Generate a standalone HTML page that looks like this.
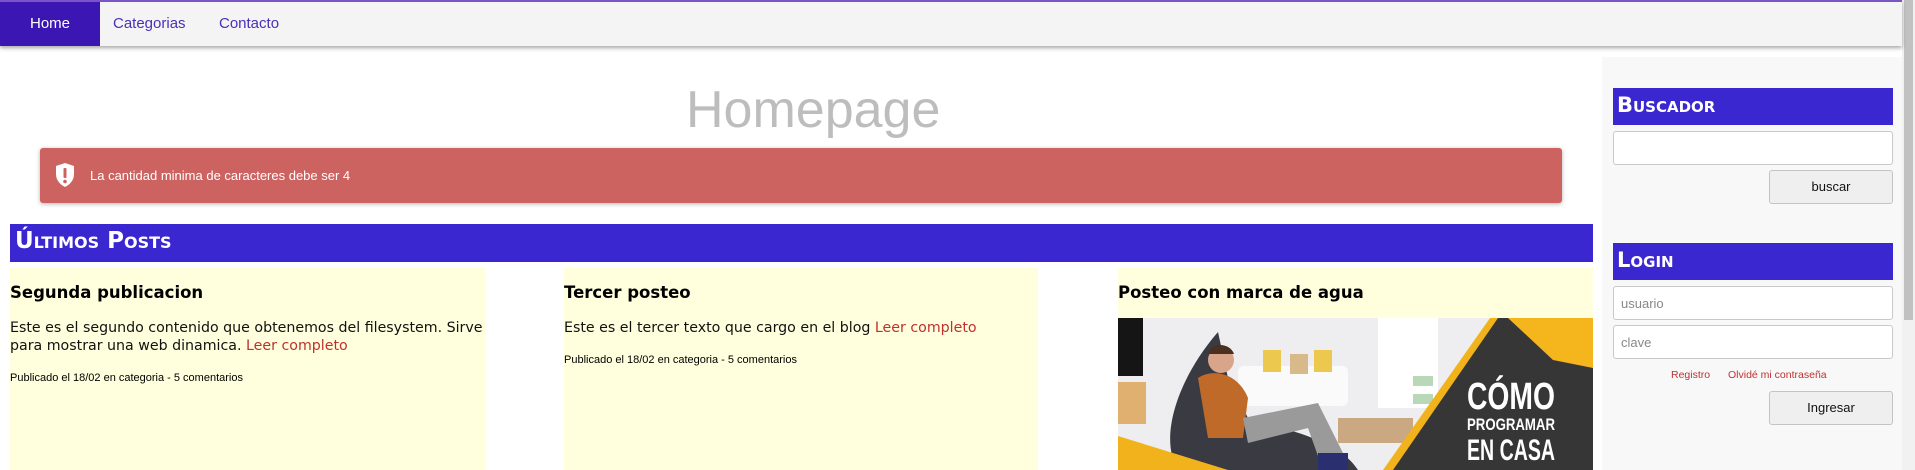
<!DOCTYPE html>
<html><head><meta charset="utf-8"><style>
*{box-sizing:border-box;margin:0;padding:0}
body{width:1915px;height:470px;overflow:hidden;background:#fff;font-family:"Liberation Sans",sans-serif;position:relative}
.abs{position:absolute}
nav{position:absolute;left:0;top:0;width:1902px;height:46px;background:#f4f4f4;border-top:2px solid #7b55c8;box-shadow:0 2px 4px rgba(0,0,0,.35);z-index:2}
nav a{position:absolute;top:13px;font-size:15px;color:#4a2fb8;text-decoration:none}
.home{position:absolute;left:0;top:0;width:100px;height:44px;background:#3c16b2}
.scroll{position:absolute;left:1902px;top:0;width:13px;height:470px;background:#f1f1f1}
.thumb{position:absolute;left:1904px;top:0;width:9px;height:320px;background:#c1c1c1}
.side{position:absolute;left:1602px;top:57px;width:300px;height:413px;background:#f8f8f8}
.hdr{position:absolute;background:#3b27d0;color:#fff;font-weight:bold;font-variant:small-caps;font-family:"DejaVu Sans",sans-serif}
.post{position:absolute;top:268px;height:202px;background:#ffffdd}
.post h3{position:absolute;left:0;top:15px;font-family:"DejaVu Sans",sans-serif;font-size:16.5px;font-weight:bold;color:#000;white-space:nowrap}
.post p{position:absolute;left:0;top:51px;font-family:"DejaVu Sans",sans-serif;font-size:14.2px;line-height:18px;color:#111}
.post p a{color:#c0302f;text-decoration:none}
.meta{position:absolute;left:0;font-size:11px;color:#000;white-space:nowrap}
.inp{position:absolute;left:1613px;width:280px;height:34px;background:#fff;border:1px solid #c9c9c9;border-radius:3px;font-size:13px;color:#888;padding:9px 0 0 7px}
.btn{position:absolute;left:1769px;width:124px;height:34px;background:#efefef;border:1px solid #c4c4c4;border-radius:3px;font-size:13px;color:#111;text-align:center;line-height:32px}
</style></head><body>
<nav><div class="home"></div>
<a style="left:30px;color:#fff">Home</a>
<a style="left:113px">Categorias</a>
<a style="left:219px">Contacto</a></nav>
<div class="scroll"></div><div class="thumb"></div>

<div class="abs" style="left:686px;top:80px;font-size:52px;color:#bdbdbd;font-family:'Liberation Sans',sans-serif;font-weight:normal">Homepage</div>

<div class="abs" style="left:40px;top:148px;width:1522px;height:55px;background:#cd6360;border-radius:3px;box-shadow:0 1px 4px rgba(0,0,0,.3)">
<svg class="abs" style="left:14px;top:14px" width="22" height="26" viewBox="0 0 22 26"><path d="M11 1 L20 4 L20 12 C20 19 15 23 11 25 C7 23 2 19 2 12 L2 4 Z" fill="#fff"/><rect x="9.5" y="6" width="3" height="10" rx="1" fill="#cd6360"/><circle cx="11" cy="19.5" r="1.8" fill="#cd6360"/></svg>
<div class="abs" style="left:50px;top:20px;color:#fff;font-size:13px">La cantidad minima de caracteres debe ser 4</div></div>

<div class="hdr" style="left:10px;top:224px;width:1583px;height:38px;font-size:23px;padding:4px 0 0 5px">Últimos Posts</div>

<div class="post" style="left:10px;width:475px"><h3>Segunda publicacion</h3>
<p>Este es el segundo contenido que obtenemos del filesystem. Sirve para mostrar una web dinamica. <a>Leer completo</a></p>
<div class="meta" style="top:104px">Publicado el 18/02 en categoria - 5 comentarios</div></div>

<div class="post" style="left:564px;width:474px"><h3>Tercer posteo</h3>
<p>Este es el tercer texto que cargo en el blog <a>Leer completo</a></p>
<div class="meta" style="top:86px">Publicado el 18/02 en categoria - 5 comentarios</div></div>

<div class="post" style="left:1118px;width:475px"><h3>Posteo con marca de agua</h3>
<svg class="abs" style="left:0;top:50px" width="475" height="152" viewBox="0 0 475 152">
<rect width="475" height="152" fill="#eeeef0"/>
<rect x="0" y="0" width="25" height="58" fill="#151515"/>
<rect x="0" y="64" width="28" height="42" fill="#e0b070"/>
<rect x="120" y="48" width="110" height="40" rx="6" fill="#fafafa"/>
<rect x="145" y="32" width="18" height="22" fill="#ecc84f"/><rect x="172" y="36" width="18" height="20" fill="#d8b98a"/><rect x="196" y="32" width="18" height="22" fill="#ecc84f"/>
<rect x="260" y="0" width="60" height="90" fill="#fff"/><rect x="295" y="58" width="20" height="10" fill="#b8d8b8"/><rect x="295" y="76" width="20" height="10" fill="#b8d8b8"/>
<rect x="220" y="100" width="75" height="25" fill="#c9a882"/>
<path d="M100 14 C60 60 40 120 60 152 L240 152 C220 120 160 110 130 100 L110 60 Z" fill="#3a3a42"/>
<path d="M80 60 C95 50 120 55 130 80 L125 120 L90 120 Z" fill="#c06a2a"/>
<circle cx="103" cy="42" r="13" fill="#d9a58a"/><path d="M90 36 C92 24 112 24 116 36 Z" fill="#4a3020"/>
<path d="M125 100 L200 85 L230 145 L205 152 L190 110 L130 125 Z" fill="#9a9a9a"/>
<rect x="200" y="135" width="30" height="17" fill="#2a2f70"/>
<path d="M0 118 L110 152 L0 152 Z" fill="#f2b21b"/>
<path d="M372 0 L475 0 L475 152 L265 152 Z" fill="#f2b21b"/>
<path d="M380 0 L475 0 L475 152 L275 152 Z" fill="#363636"/>
<path d="M390 0 L475 0 L475 50 L435 42 Z" fill="#f5b51c"/>
<text x="393" y="91" text-anchor="middle" font-family="Liberation Sans" font-weight="bold" font-size="38" fill="#fff" textLength="88" lengthAdjust="spacingAndGlyphs">CÓMO</text>
<text x="393" y="112" text-anchor="middle" font-family="Liberation Sans" font-weight="bold" font-size="17" fill="#fff" textLength="88" lengthAdjust="spacingAndGlyphs">PROGRAMAR</text>
<text x="393" y="142" text-anchor="middle" font-family="Liberation Sans" font-weight="bold" font-size="30" fill="#fff" textLength="88" lengthAdjust="spacingAndGlyphs">EN CASA</text>
</svg></div>

<div class="side"></div>
<div class="hdr" style="left:1613px;top:88px;width:280px;height:37px;font-size:21px;padding:5px 0 0 4px">Buscador</div>
<div class="inp" style="top:131px"></div>
<div class="btn" style="top:170px">buscar</div>
<div class="hdr" style="left:1613px;top:243px;width:280px;height:37px;font-size:21px;padding:5px 0 0 4px">Login</div>
<div class="inp" style="top:286px">usuario</div>
<div class="inp" style="top:325px">clave</div>
<div class="abs" style="left:1671px;top:369px;font-size:10.5px;color:#c0302f">Registro</div>
<div class="abs" style="left:1728px;top:369px;font-size:10.5px;color:#c0302f">Olvidé mi contraseña</div>
<div class="btn" style="top:391px">Ingresar</div>
</body></html>
